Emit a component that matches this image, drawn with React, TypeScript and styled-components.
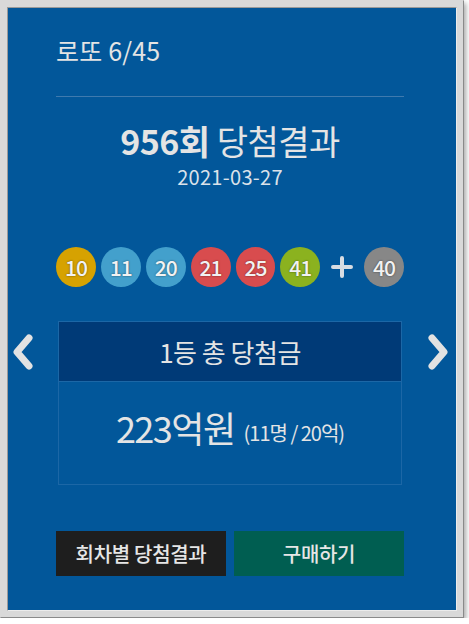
import React from 'react';
import styled, { createGlobalStyle } from 'styled-components';

const GlobalStyle = createGlobalStyle`
  html, body {
    margin: 0;
    padding: 0;
    background: #ffffff;
  }
  body {
    font-family: "Noto Sans CJK KR", "Noto Sans", sans-serif;
  }
`;

const Frame = styled.div`
  width: 464px;
  height: 618px;
  box-sizing: border-box;
  padding: 6px;
  background: #d9d9d9;
  border: 1px solid #d9d9d9;
  border-right-color: #8a8a8a;
  border-bottom-color: #8a8a8a;
  box-shadow: 2px 3px 5px rgba(0, 0, 0, 0.35);
`;

const Panel = styled.div`
  position: relative;
  height: 100%;
  box-sizing: border-box;
  padding: 26px 52px 0 48px;
  background: #02579a;
  border: 1px solid #9a9a9a;
  border-right-color: #ececec;
  border-bottom-color: #ececec;
  color: #e4e4e4;
`;

const GameName = styled.div`
  font-size: 25px;
  line-height: 32px;
  letter-spacing: 0.2px;
`;

const Divider = styled.hr`
  margin: 30px 0 0;
  border: 0;
  height: 1px;
  background: #3f7aae;
`;

const RoundTitle = styled.h2`
  margin: 24px 0 0;
  text-align: center;
  font-size: 34px;
  line-height: 40px;
  font-weight: 400;
  letter-spacing: -0.5px;

  strong {
    font-weight: 700;
  }
`;

const DrawDate = styled.div`
  margin-top: 4px;
  text-align: center;
  font-size: 20px;
  line-height: 24px;
  letter-spacing: 0.3px;
  color: #dbe2ea;
`;

const BallRow = styled.div`
  display: flex;
  align-items: center;
  gap: 5px;
  margin-top: 58px;
`;

const Ball = styled.span<{ $color: string }>`
  display: flex;
  align-items: center;
  justify-content: center;
  width: 40px;
  height: 40px;
  border-radius: 50%;
  background: ${(p) => p.$color};
  color: #f2f2f2;
  font-size: 21px;
  font-weight: 500;
  letter-spacing: -1px;
  text-shadow: 0 0 2px rgba(0, 0, 0, 0.55);
`;

const Plus = styled.span`
  display: flex;
  align-items: center;
  justify-content: center;
  width: 34px;
  height: 40px;
`;

const PrizeBox = styled.div`
  margin: 34px 2px 0;
  border: 1px solid #1c67a6;
`;

const PrizeHead = styled.div`
  height: 59px;
  display: flex;
  align-items: center;
  justify-content: center;
  background: #003a77;
  border-bottom: 1px solid #1c67a6;
  font-size: 26px;
  letter-spacing: -0.5px;
`;

const PrizeBody = styled.div`
  height: 102px;
  display: flex;
  align-items: center;
  justify-content: center;
  gap: 9px;
  padding-bottom: 12px;
  box-sizing: border-box;
`;

const Amount = styled.span`
  font-size: 36px;
  letter-spacing: -1.5px;
`;

const Winners = styled.span`
  font-size: 20px;
  letter-spacing: -1px;
  padding-top: 10px;
`;

const NavArrow = styled.button<{ $side: 'left' | 'right' }>`
  position: absolute;
  top: 325px;
  ${(p) => (p.$side === 'left' ? 'left: 2px;' : 'right: 5px;')}
  width: 26px;
  height: 38px;
  padding: 0;
  border: 0;
  background: none;
  display: flex;
  align-items: center;
  justify-content: center;
`;

const ButtonRow = styled.div`
  display: flex;
  gap: 8px;
  margin-top: 46px;
`;

const ActionButton = styled.button<{ $bg: string }>`
  flex: 1;
  height: 45px;
  border: 0;
  background: ${(p) => p.$bg};
  color: #e6e6e6;
  font-family: "Noto Sans CJK KR", "Noto Sans", sans-serif;
  font-size: 20px;
  font-weight: 500;
  letter-spacing: -0.3px;
`;

const balls = [
  { n: 10, color: '#d6a201' },
  { n: 11, color: '#43a0cc' },
  { n: 20, color: '#43a0cc' },
  { n: 21, color: '#d84c4e' },
  { n: 25, color: '#d84c4e' },
  { n: 41, color: '#8bb21f' },
];

const Chevron = ({ dir }: { dir: 'left' | 'right' }) => (
  <svg width="24" height="38" viewBox="0 0 24 38">
    <path
      d={dir === 'left' ? 'M18 5 L6 19 L18 33' : 'M6 5 L18 19 L6 33'}
      fill="none"
      stroke="#e2e2e2"
      strokeWidth="7"
      strokeLinecap="round"
      strokeLinejoin="round"
    />
  </svg>
);

export default function App() {
  return (
    <>
      <GlobalStyle />
      <Frame>
        <Panel>
          <GameName>로또 6/45</GameName>
          <Divider />
          <RoundTitle>
            <strong>956회</strong> 당첨결과
          </RoundTitle>
          <DrawDate>2021-03-27</DrawDate>

          <BallRow>
            {balls.map((b) => (
              <Ball key={b.n} $color={b.color}>
                {b.n}
              </Ball>
            ))}
            <Plus>
              <svg width="22" height="22" viewBox="0 0 22 22">
                <path d="M11 2 V20 M2 11 H20" stroke="#d8dde3" strokeWidth="4" strokeLinecap="round" />
              </svg>
            </Plus>
            <Ball $color="#878787">40</Ball>
          </BallRow>

          <PrizeBox>
            <PrizeHead>1등 총 당첨금</PrizeHead>
            <PrizeBody>
              <Amount>223억원</Amount>
              <Winners>(11명 / 20억)</Winners>
            </PrizeBody>
          </PrizeBox>

          <ButtonRow>
            <ActionButton $bg="#1e1e1e">회차별 당첨결과</ActionButton>
            <ActionButton $bg="#005e51">구매하기</ActionButton>
          </ButtonRow>

          <NavArrow $side="left" aria-label="이전 회차">
            <Chevron dir="left" />
          </NavArrow>
          <NavArrow $side="right" aria-label="다음 회차">
            <Chevron dir="right" />
          </NavArrow>
        </Panel>
      </Frame>
    </>
  );
}
